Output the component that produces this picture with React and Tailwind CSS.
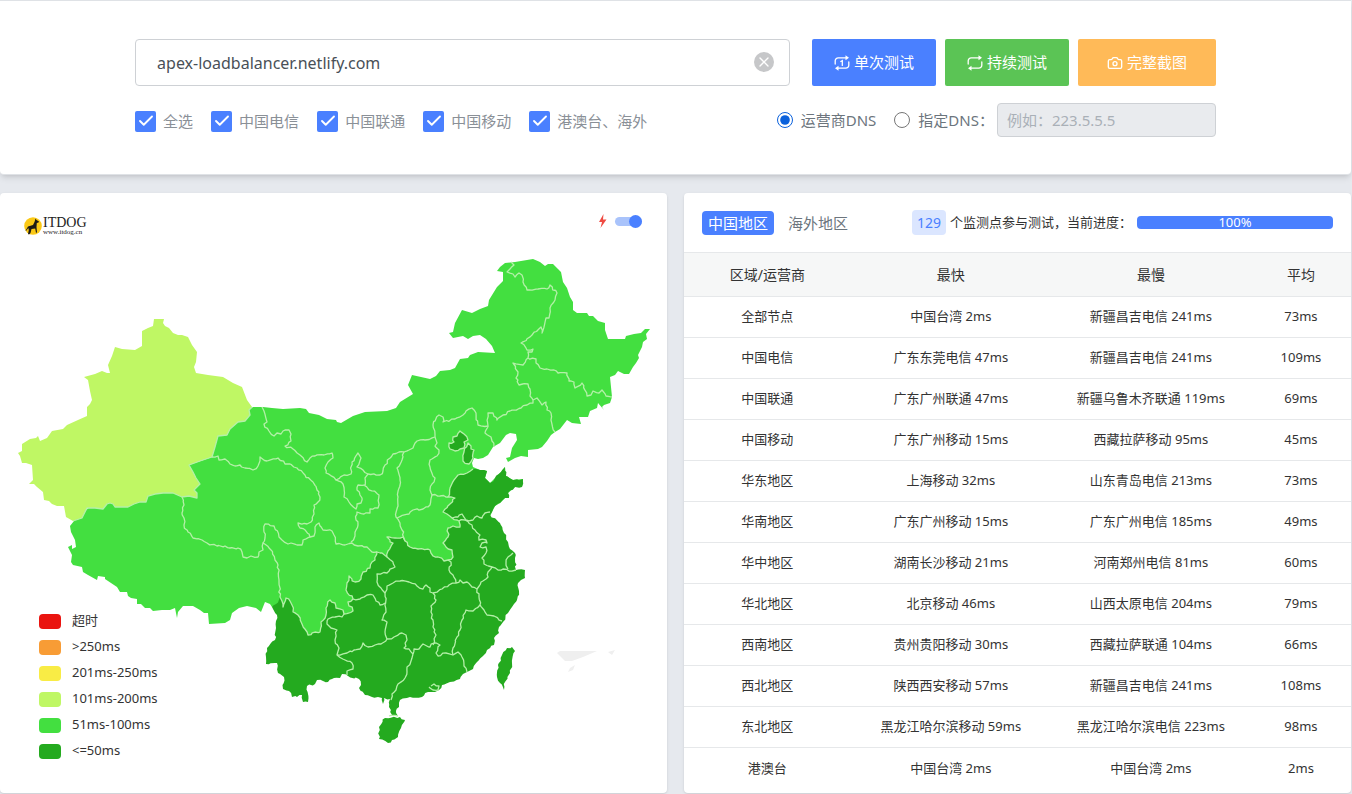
import React from 'react'
import { Camera, Check, X } from 'lucide-react'

const ISPS = ['全选', '中国电信', '中国联通', '中国移动', '港澳台、海外']

const LEGEND = [
  { label: '超时', color: 'bg-[#ea1410]' },
  { label: '>250ms', color: 'bg-[#f89c35]' },
  { label: '201ms-250ms', color: 'bg-[#f9ec45]' },
  { label: '101ms-200ms', color: 'bg-[#bff764]' },
  { label: '51ms-100ms', color: 'bg-[#43df40]' },
  { label: '<=50ms', color: 'bg-[#24aa1f]' },
]

const ROWS = [
  ['全部节点', '中国台湾 2ms', '新疆昌吉电信 241ms', '73ms'],
  ['中国电信', '广东东莞电信 47ms', '新疆昌吉电信 241ms', '109ms'],
  ['中国联通', '广东广州联通 47ms', '新疆乌鲁木齐联通 119ms', '69ms'],
  ['中国移动', '广东广州移动 15ms', '西藏拉萨移动 95ms', '45ms'],
  ['华东地区', '上海移动 32ms', '山东青岛电信 213ms', '73ms'],
  ['华南地区', '广东广州移动 15ms', '广东广州电信 185ms', '49ms'],
  ['华中地区', '湖南长沙移动 21ms', '河南郑州电信 81ms', '60ms'],
  ['华北地区', '北京移动 46ms', '山西太原电信 204ms', '79ms'],
  ['西南地区', '贵州贵阳移动 30ms', '西藏拉萨联通 104ms', '66ms'],
  ['西北地区', '陕西西安移动 57ms', '新疆昌吉电信 241ms', '108ms'],
  ['东北地区', '黑龙江哈尔滨移动 59ms', '黑龙江哈尔滨电信 223ms', '98ms'],
  ['港澳台', '中国台湾 2ms', '中国台湾 2ms', '2ms'],
]

// Map outlines, drawn in one shared coordinate space
const MAINLAND =
  'M189 465L212 457L218 436L227 435L230 429L238 422L245 421L250 415L249 410L253 407L263 407L272 408L283 409L300 408L306 409L309 413L319 415L327 419L336 420L337 422L341 423L353 416L365 412L387 411L396 408L400 402L413 394L408 385L412 375L430 379L436 376L440 371L450 370L455 368L460 359L468 358L470 355L478 352L495 353L492 346L486 339L480 335L473 336L468 339L463 336L453 338L449 333L453 332L455 323L462 310L472 313L480 309L488 306L489 300L497 287L503 281L503 272L497 271L500 267L505 263L515 262L533 259L540 262L545 266L548 264L553 264L558 269L561 272L563 282L567 288L570 297L573 302L573 310L577 313L587 313L589 316L593 316L598 321L605 323L605 330L608 339L625 339L626 336L630 335L634 334L641 333L645 329L650 329L646 334L647 339L643 342L642 347L638 355L639 358L636 363L633 367L629 374L624 374L618 371L615 375L610 377L612 397L610 403L604 405L602 407L604 410L598 403L597 408L590 411L588 417L579 417L581 424L572 423L567 420L560 429L555 432L551 435L547 441L542 447L538 449L528 450L528 457L521 456L515 458L508 462L506 458L510 457L512 448L517 440L516 434L510 433L506 435L500 443L493 447L488 455L483 458L478 459L474 458L472 463L473 467L480 470L487 471L485 478L490 483L495 478L501 472L505 467L506 476L513 480L523 479L522 487L515 487L508 493L509 498L505 498L500 503L495 506L492 512L480 540L400 620L350 630L308 645L294 640L286 608L283 606L272 607L270 604L265 602L261 612L256 608L247 606L239 608L232 613L230 620L225 623L209 624L208 613L204 613L200 610L193 606L183 606L178 612L177 618L175 608L170 610L162 610L153 611L150 608L145 608L141 604L137 604L137 599L131 598L128 596L127 592L120 592L117 587L105 579L105 577L98 576L97 580L88 575L83 572L82 567L73 565L71 562L72 555L68 547L72 545L72 549L76 547L75 540L71 532L70 526L74 521L120 480Z'

const XINJIANG =
  'M154 319L164 319L163 323L165 326L169 328L173 333L178 335L182 335L188 337L192 345L197 352L196 362L194 367L196 373L208 375L223 377L233 383L242 387L247 400L252 407L249 410L250 415L245 421L238 422L230 429L227 435L218 436L215 447L212 457L200 461L189 465L193 472L196 478L200 484L194 490L197 493L197 498L189 496L182 497L173 493L163 493L155 494L148 496L146 502L140 502L134 504L128 507L115 507L113 504L110 503L107 504L103 509L95 508L87 508L82 518L73 521L66 517L64 506L57 506L52 504L49 501L44 500L43 492L37 487L34 484L29 484L33 480L32 465L26 463L22 463L20 456L18 453L22 451L22 444L30 439L36 438L38 436L40 441L47 438L52 431L63 429L67 425L78 420L87 416L87 407L90 404L92 400L90 391L88 380L84 377L95 374L102 371L107 373L110 373L108 365L112 356L115 347L122 349L135 350L142 346L142 331L148 328L153 326Z'

const SOUTH =
  'M272 607L276 604L280 597L282 601L283 607L286 598L290 601L292 605L293 612L298 615L302 624L308 635L315 632L320 632L321 622L326 615L326 608L330 600L335 603L336 608L343 610L344 614L353 611L348 602L353 599L346 590L347 583L349 576L355 582L361 579L363 572L370 568L372 562L375 560L377 552L382 553L387 557L388 551L393 543L387 537L395 538L403 537L405 541L410 547L418 549L430 550L433 556L438 557L444 561L448 560L453 557L452 550L446 547L443 543L448 537L448 528L453 526L460 527L459 521L452 518L447 514L443 512L450 504L455 498L448 497L450 488L458 475L467 473L473 469L480 470L487 471L485 478L490 483L495 478L501 472L505 467L506 476L513 480L523 479L522 487L515 487L508 493L509 498L505 498L500 503L495 506L492 512L490 515L500 523L504 533L508 542L510 549L515 553L516 570L525 570L525 578L521 580L518 583L519 591L517 600L512 607L508 613L503 622L499 627L499 633L494 638L494 645L487 650L483 656L477 662L473 669L467 672L463 674L460 679L450 682L442 685L439 690L435 692L428 692L422 697L410 697L400 700L399 707L396 711L398 716L392 715L389 707L390 699L384 698L383 704L382 698L378 697L372 697L365 695L359 688L361 685L359 679L348 676L342 674L340 678L332 679L328 682L323 681L317 680L315 684L307 686L308 702L303 702L302 695L297 697L292 697L289 691L283 689L284 677L278 673L277 663L266 664L266 657L267 648L275 640L276 628L277 615Z'

const ISLANDS = [
  'M385 718L400 717L405 720L401 728L398 737L392 740L388 743L379 739L379 727Z',
  'M512 647L515 651L512 663L510 673L505 682L504 690L500 683L497 677L498 665L502 655L507 648Z',
]

const CITIES = [
  'M460 431L464 434L468 440L464 442L464 448L460 449L455 451L450 449L449 443L454 442L453 437L457 436Z',
  'M468 443L471 446L471 449L474 450L473 458L469 464L463 461L464 452Z',
]

const XINJIANG_BORDER =
  'M252 407L249 410L250 415L245 421L238 422L230 429L227 435L218 436L215 447L212 457L200 461L189 465L193 472L196 478L200 484L194 490L197 493L197 498L189 496L182 497L173 493L163 493L155 494L148 496L146 502L140 502L134 504L128 507L115 507L113 504L110 503L107 504L103 509L95 508L87 508L82 518L73 521'

const BORDERS = [
  // northern edge of the southern provinces
  'M280 597L282 601L283 607L286 598L290 601L292 605L293 612L298 615L302 624L308 635L315 632L320 632L321 622L326 615L326 608L330 600L335 603L336 608L343 610L344 614L353 611L348 602L353 599L346 590L347 583L349 576L355 582L361 579L363 572L370 568L372 562L375 560L377 552L382 553L387 557L388 551L393 543L387 537L395 538L403 537L405 541L410 547L418 549L430 550L433 556L438 557L444 561L448 560L453 557L452 550L446 547L443 543L448 537L448 528L453 526L460 527L459 521L452 518L447 514L443 512L450 504L455 498L448 497L450 488L458 475L467 473L473 469',
  // inner mongolia and its southern neighbours
  'M262 407L267 422L264 424L269 431L274 436L277 433L281 434L283 431L289 430L291 434L291 441L285 446L293 449L300 455L307 462L310 458L315 456L324 455L332 453L333 458L328 462L325 468L326 473L336 480L344 475L351 474L352 462L358 453L361 458L357 467L363 470L368 474L380 475L383 471L385 465L393 454L399 452L404 452L409 450L413 448L417 441L425 440L435 437L433 425L439 415L443 417L443 422L455 419L463 415L466 411L472 408L476 413L478 425L488 426L488 413L493 413L497 420L503 415L510 411L521 408L527 405L533 403L533 400L530 396L530 389L528 384L519 385L516 378L518 372L513 363L523 365L528 358L528 352L532 352L533 349L527 350L521 343L532 335L541 327L542 333L546 318L549 318L550 308L555 300L557 293L550 285L547 289L538 289L527 290L523 282L522 275L519 273L515 277L513 274L507 272L514 265L511 262',
  'M528 358L536 359L536 363L540 368L547 369L554 370L558 373L567 373L569 381L574 382L575 388L582 383L587 396L591 395L593 391L599 393L602 390L606 396L612 397',
  'M533 400L537 398L542 405L546 402L547 410L551 413L551 420L555 432',
  'M488 426L485 433L491 437L492 441L494 447',
  // hebei, shanxi, henan
  'M435 437L437 443L435 446L439 450L437 456L430 460L430 467L435 478L432 484L430 490L432 495L440 496L448 497',
  'M432 495L430 505L423 509L413 510L409 514L397 518',
  'M404 452L402 460L397 468L400 480L398 497L396 517L400 523L402 530L405 541',
  // shaanxi, ningxia, gansu
  'M368 474L365 478L365 486L379 495L378 508L370 509L370 513L364 514L357 512L356 520L358 525L356 530L355 536L351 542',
  'M336 480L343 484L344 497L349 502L356 509L357 504L361 503L362 498L360 495L357 490L358 485L365 485',
  'M212 457L218 456L219 460L225 459L230 464L235 466L240 465L245 468L253 470L258 466L260 457L267 461L278 458L285 464L290 464L297 468L305 475L313 482L317 490L320 497L318 502L314 505L314 514L311 522L307 524L298 523L300 528L309 534L310 537L303 540L302 545L297 545L291 543L288 544L282 540L279 537L274 526L265 524L264 532L265 538L263 543',
  'M310 537L314 536L315 527L319 523L323 530L332 531L334 535L336 544L345 545L352 543L358 546L367 547L372 552L377 552',
  // tibet
  'M182 497L184 505L182 513L184 518L184 525L188 532L193 538L202 540L207 543L217 546L225 546L230 548L238 548L242 552L243 557L247 558L251 556L258 557L259 552L263 550L263 543L271 550L275 560L278 565L279 580L280 597',
  // southern provinces
  'M344 614L342 617L335 617L328 619L327 624L331 628L337 630L335 640L339 648L337 655L345 660L352 663L353 669L347 671L347 675',
  'M337 655L347 653L354 650L360 649L363 643L368 647L375 645L381 644L387 639L394 637L402 633L406 635L407 640L404 648L409 649L413 654',
  'M387 639L385 632L387 622L382 620L386 612L385 593',
  'M353 599L360 599L367 595L373 595L376 601L380 605L385 603',
  'M385 593L381 588L377 582L377 574L387 573L390 569L395 567L393 562L387 557',
  'M385 593L387 586L393 583L400 581L409 582L417 586L423 589L426 585L430 588L430 592L433 593L442 589L449 585L456 583L460 580L463 583L467 582L472 587L477 589',
  'M456 583L453 575L449 570L451 562L448 560',
  'M433 593L436 600L431 606L431 612L433 620L433 627L436 635L433 645',
  'M413 654L414 649L419 649L423 644L430 647L434 643L440 645L436 653L438 656L446 653L453 655L458 652L462 657L464 666L467 672',
  'M413 654L411 661L407 667L407 672L405 678L398 684L396 690L392 694L391 700',
  'M453 655L453 648L457 637L460 630L462 620L466 610L473 611L480 605',
  'M477 589L479 597L480 605L484 610L487 615L494 616L502 621',
  'M477 589L481 582L488 577L488 572L492 567L498 570L503 569L509 571L516 570',
  'M492 567L484 564L482 558L486 553L486 547L480 547L482 543L487 543L486 540L479 540L480 535L475 530L472 525L465 520L459 521',
  'M452 518L458 517L462 514L466 520L473 520L477 516L482 518L485 513L490 512',
  'M513 553L508 557L506 564L508 569',
  'M431 686L434 684L439 686L438 690L433 690L429 687',
  'M389 716L398 716',
]

const INSET = [
  'M557 653L560 651L597 651L583 657L572 661L565 661Z',
  'M568 672L570 668L575 665L573 670Z',
  'M608 652L615 650L612 655Z',
]

// Splits long edges and nudges the new points so that borders look surveyed, not ruled.
// The nudge depends on the point only, so that shared edges stay shared.
const roughen = (d) => {
  const closed = d.endsWith('Z')
  const points = d.slice(1).replace('Z', '').split('L').map((p) => p.split(' ').map(Number))
  if (closed) points.push(points[0])
  const out = [points[0]]
  for (let i = 1; i < points.length; i++) {
    const [ax, ay] = points[i - 1]
    const [bx, by] = points[i]
    const steps = Math.max(1, Math.round(Math.hypot(bx - ax, by - ay) / 3))
    for (let s = 1; s < steps; s++) {
      const x = ax + ((bx - ax) * s) / steps
      const y = ay + ((by - ay) * s) / steps
      const seed = Math.round(x * 10) * 0.37 + Math.round(y * 10) * 0.73
      out.push([x + Math.sin(seed) * 0.9, y + Math.cos(seed * 1.7) * 0.9])
    }
    out.push([bx, by])
  }
  return 'M' + out.map(([x, y]) => `${x.toFixed(1)} ${y.toFixed(1)}`).join('L') + (closed ? 'Z' : '')
}

const RepeatIcon = ({ once }) => (
  <svg className="w-4 h-4" viewBox="0 0 16 16" fill="none" stroke="currentColor" strokeWidth="1.3" strokeLinecap="round" aria-hidden="true">
    <path d="M1.200 9V5.800a3 3 0 0 1 3-3H12" />
    <path d="M14.800 7V10.200a3 3 0 0 1-3 3H4" />
    <path d="M11.500 0.300 15 2.800 11.500 5.300ZM4.500 10.700 1 13.200 4.500 15.700Z" fill="currentColor" stroke="none" />
    {once && <path d="M6.800 6.500 8.300 5.600V10.400" />}
  </svg>
)

const SearchPanel = () => {
  return (
    <section className="bg-white border-y border-[#dfe2e6] rounded-b-sm shadow-md pt-[38px] pb-[37px]">
      <div className="w-4/5 mx-auto">
        <div className="flex items-center">
          <div className="relative flex-1 mr-[22px]">
            <input
              type="text"
              aria-label="域名"
              defaultValue="apex-loadbalancer.netlify.com"
              className="w-full h-[47px] pl-[21px] pr-12 border border-[#ced1d5] rounded text-base text-[#495057] outline-none"
            />
            <button type="button" aria-label="清空" className="absolute right-4 top-[13px] w-5 h-5 rounded-full bg-[#c6c7c9] text-white flex items-center justify-center">
              <X className="w-4 h-4" strokeWidth={2} />
            </button>
          </div>
          <div className="flex gap-[9px] text-[15px] text-white">
            <button type="button" className="w-[124px] h-[47px] rounded-xs bg-[#4a80ff] flex items-center justify-center gap-1">
              <RepeatIcon once />单次测试
            </button>
            <button type="button" className="w-[124px] h-[47px] rounded-xs bg-[#5bc455] flex items-center justify-center gap-1">
              <RepeatIcon />持续测试
            </button>
            <button type="button" className="w-[138px] h-[47px] rounded-xs bg-[#ffba58] flex items-center justify-center gap-1">
              <Camera className="w-4 h-4" strokeWidth={2} />完整截图
            </button>
          </div>
        </div>

        <div className="flex items-center justify-between mt-[17px] text-[15px]">
          <div className="flex gap-[18px] pt-0.5 text-[#8a9097]">
            {ISPS.map((name) => (
              <label key={name} className="flex items-center gap-[7px]">
                <span className="grid place-items-center">
                  <input type="checkbox" defaultChecked className="appearance-none col-start-1 row-start-1 w-[21px] h-[21px] rounded-xs bg-[#4a80ff]" />
                  <Check className="col-start-1 row-start-1 w-[18px] h-[18px] text-white pointer-events-none" strokeWidth={2.5} />
                </span>
                {name}
              </label>
            ))}
          </div>
          <div className="flex items-center text-[#6c757d]">
            <label className="flex items-center gap-2 mr-[18px]">
              <input type="radio" name="dns" defaultChecked className="w-4 h-4 accent-[#0a61dc]" />
              运营商DNS
            </label>
            <label className="flex items-center gap-2 mr-[3px]">
              <input type="radio" name="dns" className="w-4 h-4" />
              指定DNS：
            </label>
            <input
              type="text"
              disabled
              aria-label="指定DNS"
              placeholder="例如：223.5.5.5"
              className="w-[219px] h-[34px] px-[9px] border border-[#ced1d5] rounded bg-[#e9ebee] placeholder:text-[#a9b0b7]"
            />
          </div>
        </div>
      </div>
    </section>
  )
}

const ChinaMap = () => (
  <svg className="block w-full" viewBox="0 193 667 600" role="img" aria-label="中国地图">
    <path d={MAINLAND} fill="#43df40" />
    <path d={XINJIANG} fill="#bff764" />
    <path d={roughen(SOUTH)} fill="#24aa1f" />
    {[...ISLANDS, ...CITIES].map((d) => <path key={d} d={roughen(d)} fill="#24aa1f" />)}
    <g fill="none" stroke="#b4f0a8" strokeWidth="1.3" strokeLinejoin="round">
      {[...BORDERS, ...CITIES].map((d) => <path key={d} d={roughen(d)} />)}
      <path d={XINJIANG_BORDER} />
    </g>
    {INSET.map((d) => <path key={d} d={d} fill="#efefef" />)}
  </svg>
)

const Logo = () => (
  <div className="flex items-center">
    <svg className="w-5 h-5" viewBox="0 0 20 20" aria-hidden="true">
      <circle cx="10" cy="10" r="8.800" fill="#fbc916" />
      <path d="M12.500 2.500 13.500 4 16 5.500 15.500 6.500 13.800 7 13.500 11 14 16.500 13 16.800 12.200 12.500 8.500 13 7.500 17 6 18.500 5 18 5.800 14 5.300 12 3 15 2.500 14.700 5 10.500 10 9 11.500 6Z" fill="#1c1a16" />
    </svg>
    <div className="font-['Liberation_Serif',serif] text-[#222]">
      <div className="text-[14px] leading-[12px]">ITDOG</div>
      <div className="text-[7px] leading-[6px]">www.itdog.cn</div>
    </div>
  </div>
)

const MapPanel = () => {
  return (
    <section className="relative bg-white rounded shadow-sm min-w-0 overflow-hidden">
      <ChinaMap />
      {/* Overlay header */}
      <div className="absolute top-5 left-[23px] right-[25px] flex justify-between items-start">
        <div className="pt-[3px]"><Logo /></div>
        <label className="flex items-center gap-2">
          <svg className="w-[9px] h-4" viewBox="0 0 9 16" fill="#ef4b42" aria-hidden="true">
            <path d="M5.500 1 1 9H4L2.500 15 8.500 6.500H5Z" />
          </svg>
          <input
            type="checkbox"
            role="switch"
            aria-label="加速"
            defaultChecked
            className="appearance-none relative w-[27px] h-[9px] rounded-full bg-[#a9c3fb] before:absolute before:right-0 before:-top-0.5 before:w-[13px] before:h-[13px] before:rounded-full before:bg-[#4a80ff]"
          />
        </label>
      </div>
      {/* Legend */}
      <ul className="absolute left-[39px] bottom-[29px] text-[13px] text-[#333]">
        {LEGEND.map((item) => (
          <li key={item.label} className="flex items-center gap-[11px] h-[26px]">
            <span className={`w-[22px] h-[15px] rounded ${item.color}`}></span>
            {item.label}
          </li>
        ))}
      </ul>
    </section>
  )
}

const ResultPanel = () => {
  return (
    <section className="bg-white rounded shadow-sm min-w-0 overflow-hidden">
      <div className="flex items-center justify-between h-[59px] px-[18px]">
        <div className="flex items-center gap-2 text-[15px]">
          <button type="button" className="h-6 px-[6px] rounded bg-[#4a80ff] text-white leading-6">中国地区</button>
          <button type="button" className="h-6 px-[6px] text-[#6c757d] leading-6">海外地区</button>
        </div>
        <div className="flex items-center text-[13px] text-[#333]">
          <span className="w-[34px] h-[25px] rounded bg-[#dbe6ff] text-[#4a80ff] text-sm leading-[25px] text-center mr-1">129</span>
          <span className="whitespace-nowrap">个监测点参与测试，当前进度：</span>
          <div className="w-[196px] h-[13px] rounded bg-[#4a80ff] text-white text-[13px] leading-[13px] text-center ml-[5px]" role="progressbar" aria-valuenow={100}>
            100%
          </div>
        </div>
      </div>
      <table className="w-full table-fixed text-[13px] text-[#333] text-center border-collapse">
        <thead>
          <tr className="h-11 bg-[#f6f7f7] border-y border-[#e6e8ea] text-sm">
            <th className="w-[25%] font-normal">区域/运营商</th>
            <th className="w-[30%] font-normal">最快</th>
            <th className="w-[30%] font-normal">最慢</th>
            <th className="w-[15%] font-normal">平均</th>
          </tr>
        </thead>
        <tbody>
          {ROWS.map((row) => (
            <tr key={row[0]} className="h-[41px] border-b border-[#e6e8ea] last:border-b-0">
              {row.map((cell, index) => (
                <td key={index}>{cell}</td>
              ))}
            </tr>
          ))}
        </tbody>
      </table>
    </section>
  )
}

const App = () => {
  return (
    <div className="min-h-screen pr-px bg-[#e6e9ee] font-['Noto_Sans','Noto_Sans_CJK_SC',sans-serif]">
      <SearchPanel />
      <main className="grid grid-cols-2 gap-[17px] mt-[18px]">
        <MapPanel />
        <ResultPanel />
      </main>
    </div>
  )
}

export default App
